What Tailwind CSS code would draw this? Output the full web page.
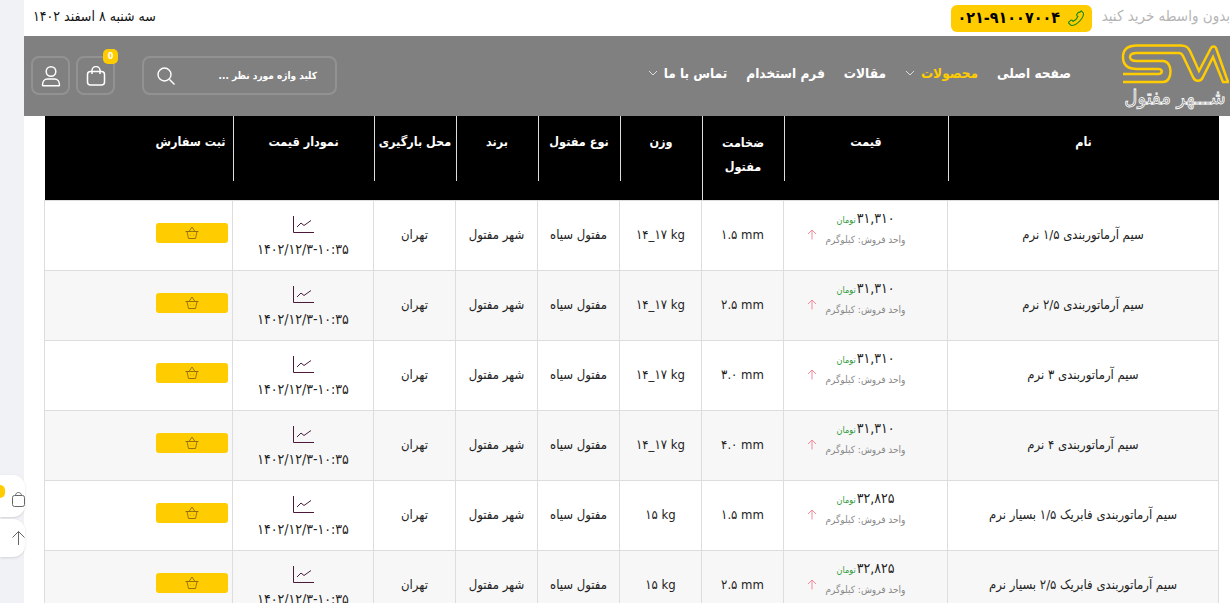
<!DOCTYPE html>
<html lang="fa" dir="rtl">
<head>
    <meta charset="UTF-8">
    <title>شهر مفتول</title>
    <script src="https://cdn.jsdelivr.net/npm/@tailwindcss/browser@4"></script>
</head>

<body class="h-[603px] overflow-hidden bg-white font-['DejaVu_Sans',sans-serif] font-stretch-condensed text-[#222]">

    <!-- left strip and floating buttons -->
    <div class="absolute left-0 top-0 h-[603px] w-6 bg-[#f1f2f6]"></div>
    <div class="absolute left-0 top-[475px] flex h-[42px] w-[25px] items-center rounded-r-xl bg-white pl-px shadow-sm">
        <span class="absolute left-0 top-[10px] h-[13px] w-[5px] rounded-r-full bg-[#ffcc00]"></span>
        <svg class="mt-[6px] h-[15px] w-[13px]" viewBox="0 0 13 15" fill="none" stroke="#666" stroke-width="1"><rect x=".5" y="3.500" width="12" height="11" rx="2"/><path d="M3.500 3.500C3.500 1.500 5 .5 6.500 .5s3 1 3 3"/></svg>
    </div>
    <div class="absolute left-0 top-[519px] flex h-[38px] w-[25px] items-center rounded-r-xl bg-white pl-px shadow-sm">
        <svg class="h-4 w-[13px]" viewBox="0 0 13 16" fill="none" stroke="#666" stroke-width="1"><path d="M6.500 15V1.500M.5 7.500l6-6 6 6"/></svg>
    </div>

    <div class="ml-6">
        <!-- top bar -->
        <div class="flex h-9 items-center justify-between pl-[9px]">
            <div class="flex items-center gap-[10px]">
                <span class="pb-1 text-[15px] whitespace-nowrap text-[#b5b5b5]">بدون واسطه خرید کنید</span>
                <div dir="ltr" class="flex h-[27px] w-[141px] items-center justify-center gap-[7px] rounded-md bg-[#ffcc00]">
                    <span class="text-[16px] font-bold text-black">۰۲۱-۹۱۰۰۷۰۰۴</span>
                    <svg class="h-[18px] w-[18px]" viewBox="0 0 24 24" fill="none" stroke="#1a8a1a" stroke-width="1.500"><path d="M19 2.500l3 3c.5 7-9.500 17-16.500 16.500l-3-3c-.6-.6-.5-1.400.1-1.900l2.600-2c.6-.4 1.300-.3 1.800.2l1 1.200c2.500-1 5.500-4 6.500-6.500l-1.200-1c-.5-.5-.6-1.200-.2-1.800l2-2.600c.5-.6 1.300-.7 1.900-.1z"/></svg>
                </div>
            </div>
            <span class="pb-1 text-[14px] text-[#111]">سه شنبه ۸ اسفند ۱۴۰۲</span>
        </div>

        <!-- nav -->
        <div class="flex h-20 items-start bg-[#808080] pl-[7px]">
            <div class="flex w-[110px] shrink-0 flex-col items-center pt-2">
                <svg class="h-[41px] w-[109px]" viewBox="0 0 109 41" fill="none" stroke="#ffcc00" stroke-width="2.500">
                    <path d="M2 30H37C42 30 42 25 37 25H16C6 25 2 20 2 13C2 6 6 1.500 16 1.500H60C65 1.500 67 3 69 7L78 27L90 4C91 2 94 2 95 4L107 38"/>
                    <path d="M2 38H42C52 38 52 17 42 17H16C11 17 9 15 9 13C9 11 11 9 16 9H58C60 9 61 10 62 12L72 33C74 38 80 38 82 33L92 13L102 38H108"/>
                </svg>
                <span class="text-[20px] leading-[24px] whitespace-nowrap text-transparent [-webkit-text-stroke:0.8px_white]">شـــهر مفتول</span>
            </div>

            <nav class="mr-[49px] flex h-[74px] items-center gap-[19px] text-[13.5px] font-bold whitespace-nowrap text-white">
                <a>صفحه اصلی</a>
                <a class="flex items-center gap-[6px] text-[#ffcc00]">محصولات
                    <svg class="h-[10px] w-[10px]" viewBox="0 0 10 10" fill="none" stroke="#ddd" stroke-width="1"><path d="M1 3l4 4 4-4"/></svg>
                </a>
                <a>مقالات</a>
                <a>فرم استخدام</a>
                <a class="flex items-center gap-[6px]">تماس با ما
                    <svg class="h-[10px] w-[10px]" viewBox="0 0 10 10" fill="none" stroke="#ddd" stroke-width="1"><path d="M1 3l4 4 4-4"/></svg>
                </a>
            </nav>

            <div class="mr-auto mt-5 flex items-center gap-[27px]">
                <div class="flex h-[39px] w-[195px] items-center justify-between rounded-lg border-2 border-[#929292] pl-[12px] pr-[18px]">
                    <span class="text-[10px] font-bold text-white">کلید واژه مورد نظر ...</span>
                    <svg class="h-[20px] w-[20px]" viewBox="0 0 20 20" fill="none" stroke="white" stroke-width="1.400"><circle cx="8.500" cy="8.500" r="6.500"/><path d="M13.500 13.500l5 5"/></svg>
                </div>
                <div class="flex gap-[6px]">
                    <div class="relative flex h-[39px] w-[39px] items-center justify-center rounded-lg border-2 border-[#929292]">
                        <span class="absolute left-[25px] -top-[9px] flex h-[15px] w-[15px] items-center justify-center rounded-[5px] bg-[#ffcc00] text-[9px] font-bold text-white">0</span>
                        <svg class="h-[20px] w-[20px]" viewBox="0 0 20 20" fill="none" stroke="white" stroke-width="1.500"><rect x="1.500" y="5.500" width="17" height="13.500" rx="3"/><path d="M6 8V4.500a4 4 0 0 1 8 0V8"/></svg>
                    </div>
                    <div class="flex h-[39px] w-[39px] items-center justify-center rounded-lg border-2 border-[#929292]">
                        <svg class="h-[22px] w-[22px]" viewBox="0 0 22 22" fill="none" stroke="white" stroke-width="1.500"><circle cx="11" cy="6.500" r="4.800"/><path d="M2.500 20c0-3.500 2-6 5-6h7c3 0 5 2.500 5 6 0 .5-.3.8-.8.8H3.300c-.5 0-.8-.3-.8-.8z"/></svg>
                    </div>
                </div>
            </div>
        </div>

        <!-- table -->
        <table class="mr-[11px] ml-[21px] w-[1174px] table-fixed border-collapse text-center text-[13px]">
            <colgroup>
                <col class="w-[271px]"><col class="w-[164px]"><col class="w-[82px]"><col class="w-[82px]"><col class="w-[82px]"><col class="w-[82px]"><col class="w-[82px]"><col class="w-[141px]"><col class="w-[188px]">
            </colgroup>
            <thead class="bg-black text-[12.5px] font-bold whitespace-nowrap text-white">
                <tr class="h-[84px]">
                    <th class="p-0 align-top"><div class="flex h-[65px] items-start justify-center border-l border-[#ddd] pt-[17px]">نام</div></th>
                    <th class="p-0 align-top"><div class="flex h-[65px] items-start justify-center border-l border-[#ddd] pt-[17px]">قیمت</div></th>
                    <th class="p-0 align-top"><div class="flex h-[84px] items-start justify-center border-l border-[#ddd] pt-[15px] leading-[24px]"><span>ضخامت<br>مفتول</span></div></th>
                    <th class="p-0 align-top"><div class="flex h-[65px] items-start justify-center border-l border-[#ddd] pt-[17px]">وزن</div></th>
                    <th class="p-0 align-top"><div class="flex h-[65px] items-start justify-center border-l border-[#ddd] pt-[17px]">نوع مفتول</div></th>
                    <th class="p-0 align-top"><div class="flex h-[65px] items-start justify-center border-l border-[#ddd] pt-[17px]">برند</div></th>
                    <th class="p-0 align-top"><div class="flex h-[65px] items-start justify-center border-l border-[#ddd] pt-[17px]">محل بارگیری</div></th>
                    <th class="p-0 align-top"><div class="flex h-[65px] items-start justify-center border-l border-[#ddd] pt-[17px]">نمودار قیمت</div></th>
                    <th class="p-0 align-top"><div class="flex h-[65px] items-start justify-start pr-[7px] pt-[17px]">ثبت سفارش</div></th>
                </tr>
            </thead>
            <tbody id="rows"></tbody>
        </table>
    </div>

    <script>
        const products = [
            ["سیم آرماتوربندی ۱/۵ نرم", "۳۱,۳۱۰", "۱.۵ mm", "۱۴_۱۷ kg"],
            ["سیم آرماتوربندی ۲/۵ نرم", "۳۱,۳۱۰", "۲.۵ mm", "۱۴_۱۷ kg"],
            ["سیم آرماتوربندی ۳ نرم", "۳۱,۳۱۰", "۳.۰ mm", "۱۴_۱۷ kg"],
            ["سیم آرماتوربندی ۴ نرم", "۳۱,۳۱۰", "۴.۰ mm", "۱۴_۱۷ kg"],
            ["سیم آرماتوربندی فابریک ۱/۵ بسیار نرم", "۳۲,۸۲۵", "۱.۵ mm", "۱۵ kg"],
            ["سیم آرماتوربندی فابریک ۲/۵ بسیار نرم", "۳۲,۸۲۵", "۲.۵ mm", "۱۵ kg"]
        ];

        const td = "border border-[#ddd] p-0";
        const cell = "border border-[#ddd] p-0 pb-[2px]";
        document.getElementById("rows").innerHTML = products.map((p, i) => `
            <tr class="h-[70px] ${i % 2 ? "bg-[#f7f7f7]" : "bg-white"}">
                <td class="${cell}">${p[0]}</td>
                <td class="${td}">
                    <div class="relative flex flex-col items-center pb-[17px]">
                        <div class="flex items-baseline gap-[1px]"><span class="text-[14px]">${p[1]}</span><span class="text-[9px] text-[#2e9a3a]">تومان</span></div>
                        <div class="mt-[3px] text-[10px] text-[#888]">واحد فروش: کیلوگرم</div>
                        <svg class="absolute left-[23px] top-[21px] h-[11px] w-[10px]" viewBox="0 0 10 11" fill="none" stroke="#f78a9a" stroke-width="1"><path d="M5 10.500V1M1 5l4-4 4 4"/></svg>
                    </div>
                </td>
                <td class="${cell}"><span dir="ltr">${p[2]}</span></td>
                <td class="${cell}"><span dir="ltr">${p[3]}</span></td>
                <td class="${cell}">مفتول سیاه</td>
                <td class="${cell}">شهر مفتول</td>
                <td class="${cell}">تهران</td>
                <td class="${td} pt-[3px]">
                    <svg class="mx-auto h-[17px] w-[21px]" viewBox="0 0 21 17" fill="none" stroke="#4a1a3a" stroke-width="1"><path d="M.500 0v16.500h20.500"/><path d="M4 11l4-4 3 2.500 7-5"/></svg>
                    <div dir="ltr" class="mt-[6px] text-[14px] leading-[20px]">۱۴۰۲/۱۲/۳-۱۰:۳۵</div>
                </td>
                <td class="${td} pr-[4px]">
                    <div class="mb-[6px] flex h-5 w-[72px] items-center justify-center rounded-[3px] bg-[#ffcc00]">
                        <svg class="h-[13px] w-[14px]" viewBox="0 0 14 13" fill="none" stroke="#8a6a10" stroke-width=".9"><path d="M.5 5.500h13M2 5.500l1.500 7h7l1.500-7M4 5.500L7 1l3 4.500M5.500 9h.5M8 9h.5"/></svg>
                    </div>
                </td>
            </tr>`).join("");
    </script>

</body>
</html>
